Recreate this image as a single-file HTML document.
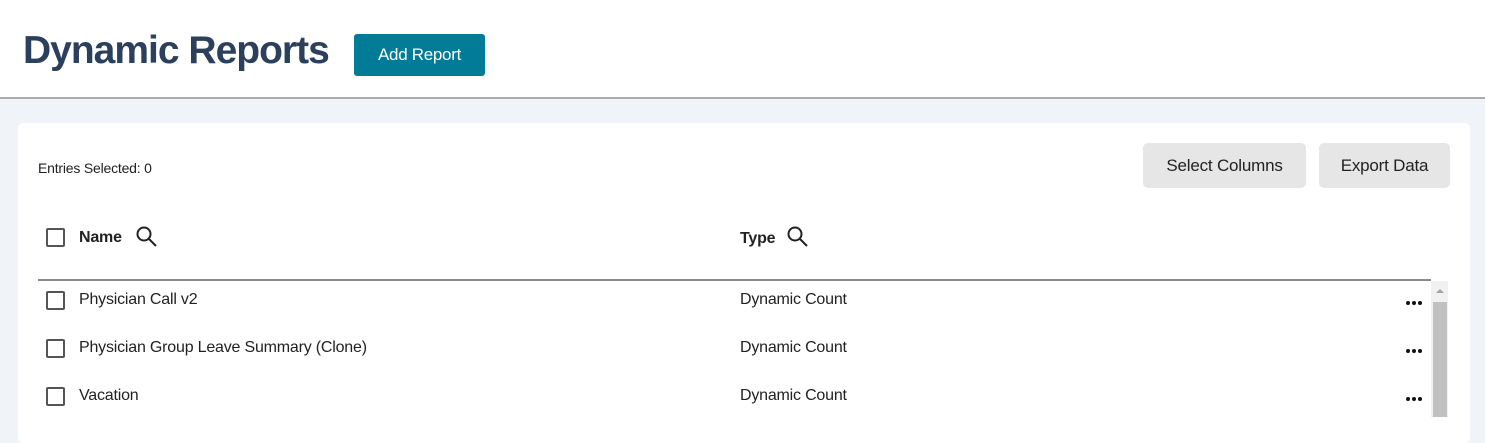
<!DOCTYPE html>
<html><head><style>
body{margin:0;width:1485px;height:417px;overflow:hidden;background:#f0f3f8;font-family:"Liberation Sans",sans-serif;position:relative}
.hdr{position:absolute;left:0;top:0;width:1485px;height:97px;background:#fff;border-bottom:2px solid #a9abae}
h1{position:absolute;left:23px;top:29px;margin:0;font-size:39px;font-weight:bold;color:#2b405c;letter-spacing:-1px}
.add{position:absolute;left:354px;top:34px;width:131px;height:42px;background:#027b96;border-radius:3px;color:#fff;font-size:17px;line-height:42px;text-align:center;letter-spacing:-0.3px}
.card{position:absolute;left:18px;top:123px;width:1452px;height:320px;background:#fff;border-radius:5px}
.t{position:absolute;color:#222;font-size:16px;letter-spacing:-0.2px}
.btn{position:absolute;top:143px;height:45px;background:#e6e6e6;border-radius:5px;font-size:17px;line-height:45px;text-align:center;color:#222;letter-spacing:-0.2px}
.cb{position:absolute;left:46px;border:2px solid #555;border-radius:2px;width:15px;height:15px}
.dots{position:absolute;left:1406px;font-size:0}
.dots i{display:inline-block;width:4px;height:4px;border-radius:50%;background:#111;margin-right:2px}
</style></head><body>
<div class="hdr"><h1>Dynamic Reports</h1><div class="add">Add Report</div></div>
<div class="card"></div>
<div class="t" style="left:38px;top:160px;font-size:14px">Entries Selected: 0</div>
<div class="btn" style="left:1143px;width:163px">Select Columns</div>
<div class="btn" style="left:1319px;width:131px">Export Data</div>
<div class="cb" style="top:228px"></div>
<div class="t" style="left:79px;top:229px;font-weight:bold">Name</div>
<svg style="position:absolute;left:135px;top:225px" width="24" height="24"><circle cx="9" cy="9" r="6.5" fill="none" stroke="#222" stroke-width="2"/><line x1="14" y1="14" x2="21" y2="21" stroke="#222" stroke-width="2"/></svg>
<div class="t" style="left:740px;top:230px;font-weight:bold">Type</div>
<svg style="position:absolute;left:786px;top:225px" width="24" height="24"><circle cx="9" cy="9" r="6.5" fill="none" stroke="#222" stroke-width="2"/><line x1="14" y1="14" x2="21" y2="21" stroke="#222" stroke-width="2"/></svg>
<div style="position:absolute;left:38px;top:279px;width:1393px;height:2px;background:#8a8a8a"></div>
<div style="position:absolute;left:1431px;top:281px;width:17px;height:136px;background:#f1f1f1"></div>
<div style="position:absolute;left:1433px;top:302px;width:14px;height:115px;background:#c1c1c1"></div>
<div style="position:absolute;left:1436px;top:289px;width:0;height:0;border-left:4px solid transparent;border-right:4px solid transparent;border-bottom:4px solid #a3a3a3"></div>
<div class="cb" style="top:291px"></div><div class="t" style="left:79px;top:291px">Physician Call v2</div><div class="t" style="left:740px;top:291px">Dynamic Count</div><div class="dots" style="top:301px"><i></i><i></i><i></i></div>
<div class="cb" style="top:339px"></div><div class="t" style="left:79px;top:339px">Physician Group Leave Summary (Clone)</div><div class="t" style="left:740px;top:339px">Dynamic Count</div><div class="dots" style="top:349px"><i></i><i></i><i></i></div>
<div class="cb" style="top:387px"></div><div class="t" style="left:79px;top:387px">Vacation</div><div class="t" style="left:740px;top:387px">Dynamic Count</div><div class="dots" style="top:397px"><i></i><i></i><i></i></div>
</body></html>
